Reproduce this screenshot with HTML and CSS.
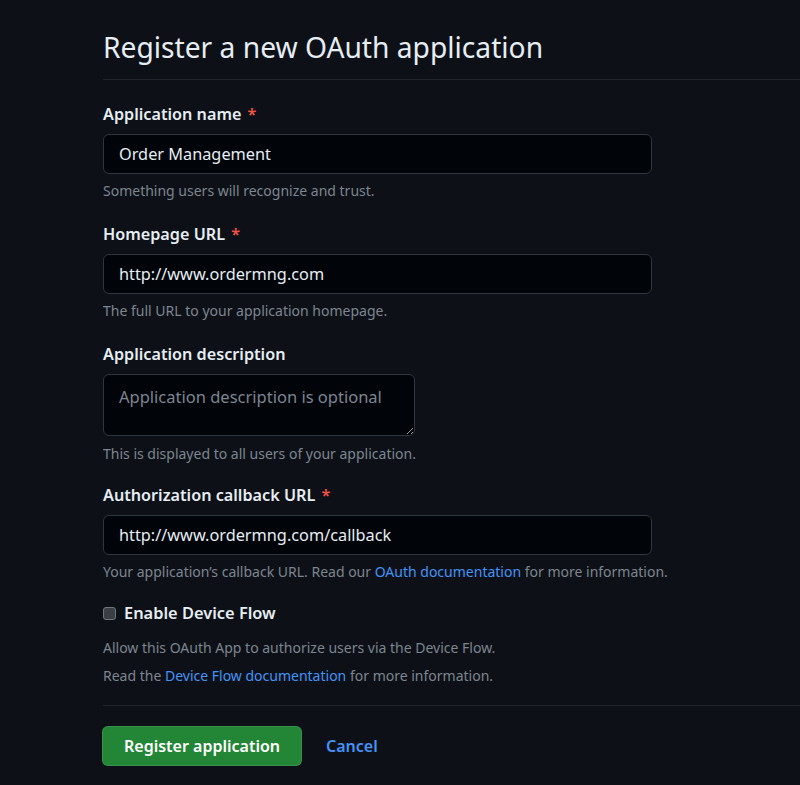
FILE: index.html
```html
<!DOCTYPE html>
<html lang="en">
<head>
<meta charset="utf-8">
<title>Register a new OAuth application</title>
<link rel="stylesheet" href="styles.css">
</head>
<body>
<main class="page">
  <h1 class="title">Register a new OAuth application</h1>
  <form class="form">
    <div class="group">
      <label class="label">Application name <span class="req">*</span></label>
      <input class="input" type="text" value="Order Management">
      <p class="note">Something users will recognize and trust.</p>
    </div>
    <div class="group">
      <label class="label">Homepage URL <span class="req">*</span></label>
      <input class="input" type="text" value="http://www.ordermng.com">
      <p class="note">The full URL to your application homepage.</p>
    </div>
    <div class="group group-ta">
      <label class="label">Application description</label>
      <textarea class="textarea" placeholder="Application description is optional"></textarea>
      <p class="note note-ta">This is displayed to all users of your application.</p>
    </div>
    <div class="group">
      <label class="label">Authorization callback URL <span class="req">*</span></label>
      <input class="input" type="text" value="http://www.ordermng.com/callback">
      <p class="note">Your application’s callback URL. Read our <a class="link" href="#">OAuth documentation</a> for more information.</p>
    </div>
    <div class="group device">
      <label class="check-label"><span class="checkbox"></span>Enable Device Flow</label>
      <p class="note note-first">Allow this OAuth App to authorize users via the Device Flow.</p>
      <p class="note note-second">Read the <a class="link" href="#">Device Flow documentation</a> for more information.</p>
    </div>
    <div class="actions">
      <button class="btn" type="button">Register application</button>
      <a class="cancel" href="#">Cancel</a>
    </div>
  </form>
</main>
</body>
</html>
```
FILE: styles.css
```css
* { box-sizing: border-box; }
html, body { margin: 0; padding: 0; }
body {
  background: #0d1117;
  color: #e6edf3;
  font-family: "Noto Sans", "Open Sans", sans-serif;
  height: 785px;
  overflow: hidden;
}
.page {
  padding: 23px 0 0 103px;
}
.title {
  margin: 0;
  font-size: 28.2px;
  font-weight: 400;
  line-height: 48px;
  padding-bottom: 8px;
  border-bottom: 1px solid #21262d;
}
.form {
  padding-top: 22px;
}
.group {
  margin-bottom: 21px;
}
.group-ta {
  margin-bottom: 19px;
}
.label {
  display: block;
  font-size: 16.2px;
  font-weight: 600;
  line-height: 24px;
  margin-bottom: 8px;
}
.req { color: #f85149; margin-left: 2px; }
.input, .textarea {
  display: block;
  width: 549px;
  height: 40px;
  padding: 0 15px;
  background: #010409;
  border: 1px solid #30363d;
  border-radius: 6px;
  color: #e6edf3;
  font-family: inherit;
  font-size: 16.3px;
  outline: none;
}
.textarea {
  width: 312px;
  height: 62px;
  padding: 10px 15px;
  resize: vertical;
  line-height: 24px;
  font-size: 16.5px;
}
.textarea::placeholder { color: #7d8590; }
.note {
  margin: 6px 0 0;
  font-size: 14px;
  line-height: 21px;
  color: #7d8590;
}
.note-ta { margin-top: 7px; }
.link { color: #4493f8; text-decoration: none; }
.device { margin-bottom: 0; }
.check-label {
  display: flex;
  align-items: center;
  font-size: 16.4px;
  font-weight: 600;
  line-height: 24px;
  margin-top: -2px;
}
.checkbox {
  width: 13px;
  height: 13px;
  margin-right: 8px;
  border: 1px solid #6e7681;
  border-radius: 3px;
  background: #3b3f45;
}
.note-first { margin-top: 12px; }
.note-second { margin-top: 7px; padding-bottom: 19px; border-bottom: 1px solid #21262d; }
.actions {
  display: flex;
  align-items: center;
  gap: 24px;
  padding-top: 20px;
  margin-left: -1px;
}
.btn {
  height: 40px;
  padding: 0 21px;
  background: #238636;
  color: #ffffff;
  border: 1px solid rgba(240,246,252,0.1);
  border-radius: 6px;
  font-family: inherit;
  font-size: 16px;
  font-weight: 600;
}
.cancel {
  color: #4493f8;
  text-decoration: none;
  font-size: 16px;
  font-weight: 600;
}
```
